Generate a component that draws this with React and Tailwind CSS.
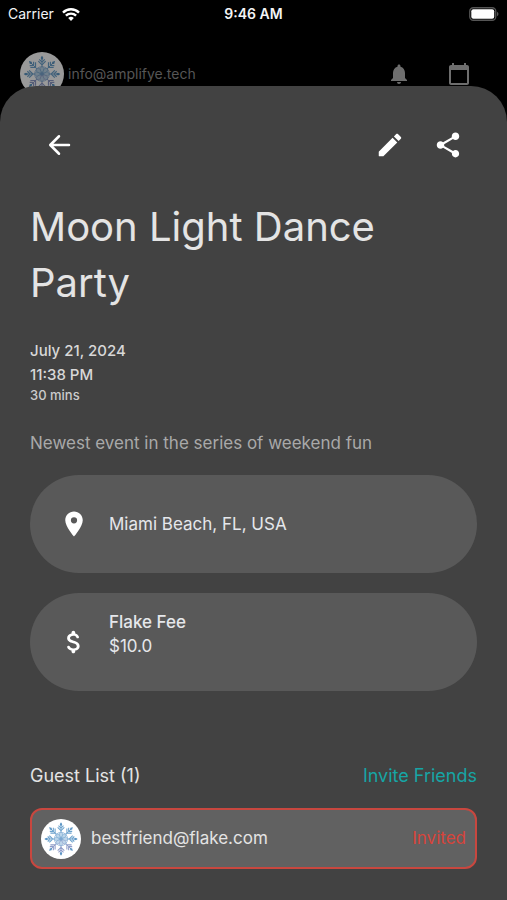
import React from 'react';
import { MdNotifications, MdCalendarToday, MdShare, MdLocationOn } from 'react-icons/md';

const guests = [{ email: 'bestfriend@flake.com', status: 'Invited' }];

const ARMS = [0, 45, 90, 135, 180, 225, 270, 315];

const Snowflake = ({ className }) => (
  <svg viewBox="0 0 48 48" className={className} aria-hidden="true">
    <circle cx="24" cy="24" r="24" fill="#fff" />
    {ARMS.map((angle) => (
      <g key={angle} transform={`rotate(${angle} 24 24)`} fill="none" stroke={angle > 90 && angle < 270 ? '#8f9cc8' : '#6ea3cd'} strokeWidth="1">
        <path d="M24 23V5" />
        <path d="M24 11l-3-3M24 11l3-3M24 14l-4-4M24 14l4-4" strokeWidth="1.3" />
        <path d="M24 4l1.5 2.5L24 9l-1.5-2.5z" fill="#5b95c4" stroke="none" />
        <path d="M24 15l2.5 3.5L24 23l-2.5-4.5z" fill="#bcd5ea" strokeWidth=".6" />
      </g>
    ))}
    <circle cx="24" cy="24" r="8" fill="none" stroke="#8fb4d8" strokeWidth="1" />
    <circle cx="24" cy="24" r="2" fill="#7ba6d0" />
  </svg>
);

const StatusBar = () => (
  <div className="grid grid-cols-3 items-center h-7 px-2 text-sm text-gray-100">
    <div className="flex items-center gap-2">
      <span>Carrier</span>
      <svg viewBox="0 0 18 13" className="w-[18px] h-[13px]" fill="none" stroke="#fff" strokeWidth="2.4" aria-hidden="true">
        <path d="M1 4.6a11.4 11.4 0 0 1 16 0" />
        <path d="M3.9 7.7a7.2 7.2 0 0 1 10.2 0" />
        <path d="M9 13L6.2 10.1a4 4 0 0 1 5.6 0z" fill="#fff" stroke="none" />
      </svg>
    </div>
    <span className="text-center font-semibold">9:46 AM</span>
    <svg viewBox="0 0 30 14" className="w-[30px] h-[14px] justify-self-end" aria-hidden="true">
      <rect x=".75" y=".75" width="26" height="12.5" rx="3.5" fill="none" stroke="#555" strokeWidth="1.3" />
      <rect x="2.3" y="2.3" width="22.9" height="9.4" rx="2" fill="#fff" />
      <path d="M28 4.8c2 .8 2 3.6 0 4.4z" fill="#555" />
    </svg>
  </div>
);

const TopBar = () => (
  <div className="flex items-center justify-between mt-6 pl-5 pr-9 text-[#6e6e6e]">
    <div className="flex items-center gap-1">
      <Snowflake className="w-11 h-11 opacity-60" />
      <span className="text-sm text-[#565656]">info@amplifye.tech</span>
    </div>
    <div className="flex items-center gap-9">
      <button aria-label="Notifications"><MdNotifications size={24} /></button>
      <button aria-label="Calendar"><MdCalendarToday size={24} /></button>
    </div>
  </div>
);

const InfoCard = ({ icon, children }) => (
  <div className="flex items-center gap-5 h-[98px] px-7 rounded-full bg-[#595959]">
    <span className="pl-px">{icon}</span>
    <div className="text-[17px] leading-6 text-gray-200">{children}</div>
  </div>
);

const App = () => {
  return (
    <div className="min-h-screen flex flex-col bg-black font-['Inter',sans-serif]">
      <StatusBar />
      <TopBar />

      {/* Event sheet, slides over the top bar */}
      <main className="relative flex-1 -mt-[10px] px-[30px] pb-8 rounded-t-[36px] bg-[#424242] text-[#e4e4e4]">
        <div className="flex items-center justify-between pt-11 px-[14px] text-white">
          <button aria-label="Back">
            <svg viewBox="0 0 24 24" className="w-[30px] h-[30px]" fill="none" stroke="currentColor" strokeWidth="2" strokeLinecap="round" strokeLinejoin="round">
              <path d="M20 12H5.2M12 5l-7 7 7 7" />
            </svg>
          </button>
          <div className="flex items-center gap-7">
            <button aria-label="Edit">
              <svg viewBox="0 0 24 24" className="w-[30px] h-[30px]" fill="currentColor">
                <path d="M3 17.46v3.04c0 .28.22.5.5.5h3.04c.13 0 .26-.05.35-.15L17.81 9.94l-3.75-3.75L3.15 17.1c-.1.1-.15.22-.15.36zM20.71 7.04c.39-.39.39-1.02 0-1.41l-2.34-2.34c-.39-.39-1.02-.39-1.41 0l-1.83 1.83 3.75 3.75 1.83-1.83z" />
              </svg>
            </button>
            <button aria-label="Share"><MdShare size={30} /></button>
          </div>
        </div>

        <h1 className="mt-[39px] text-[40px] leading-14 font-normal">Moon Light Dance Party</h1>

        <div className="mt-7 text-[15px] leading-6 font-medium text-[#d8d8d8]">
          <p>July 21, 2024</p>
          <p>11:38 PM</p>
          <p className="text-[13px] leading-4 text-[#cccccc]">30 mins</p>
        </div>

        <p className="mt-7 text-[17px] leading-6 text-[#a9a9a9]">Newest event in the series of weekend fun</p>

        <div className="flex flex-col gap-5 mt-5">
          <InfoCard icon={<MdLocationOn size={30} className="text-white" />}>
            <p>Miami Beach, FL, USA</p>
          </InfoCard>
          <InfoCard
            icon={
              <svg viewBox="0 0 24 24" className="w-[30px] h-[30px]" fill="#fff" aria-hidden="true">
                <path d="M11.8 10.9c-2.27-.59-3-1.2-3-2.15 0-1.09 1.01-1.85 2.7-1.85 1.42 0 2.13.54 2.39 1.4.12.4.45.7.87.7h.3c.66 0 1.13-.65.9-1.27-.42-1.18-1.4-2.16-2.96-2.54V4.5c0-.83-.67-1.5-1.5-1.5S10 3.67 10 4.5v.66c-1.94.42-3.5 1.68-3.5 3.61 0 2.31 1.91 3.46 4.7 4.13 2.5.6 3 1.48 3 2.41 0 .69-.49 1.79-2.7 1.79-1.65 0-2.5-.59-2.83-1.43-.15-.39-.49-.67-.9-.67h-.28c-.67 0-1.14.68-.89 1.3.57 1.39 1.9 2.21 3.4 2.53v.67c0 .83.67 1.5 1.5 1.5s1.5-.67 1.5-1.5v-.65c1.95-.37 3.5-1.5 3.5-3.55 0-2.84-2.43-3.81-4.7-4.4z" />
              </svg>
            }
          >
            <p className="font-medium">Flake Fee</p>
            <p className="pb-4">$10.0</p>
          </InfoCard>
        </div>

        <section>
          <div className="flex items-center justify-between mt-[73px] text-lg leading-6">
            <h2>Guest List ({guests.length})</h2>
            <button className="text-[#16a5a5]">Invite Friends</button>
          </div>
          <ul className="mt-5">
            {guests.map((guest) => (
              <li key={guest.email} className="flex items-center h-[61px] px-[9px] rounded-xl border-2 border-[#c8473f] bg-[#616161] text-[17px]">
                <Snowflake className="w-10 h-10" />
                <span className="flex-1 ml-[10px]">{guest.email}</span>
                <span className="text-[#d8443b]">{guest.status}</span>
              </li>
            ))}
          </ul>
        </section>
      </main>
    </div>
  );
};

export default App;
